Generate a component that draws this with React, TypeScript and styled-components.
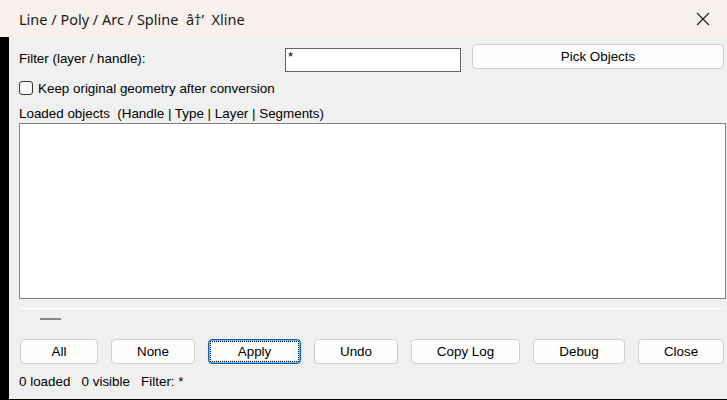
import React, { useState } from "react";
import styled, { createGlobalStyle } from "styled-components";

const GlobalStyle = createGlobalStyle`
  html, body {
    margin: 0;
    padding: 0;
    background: #f0f0f0;
  }
  * {
    box-sizing: border-box;
  }
`;

const BUTTONS = [
  { label: "All", width: 78, gap: 0 },
  { label: "None", width: 84, gap: 13 },
  { label: "Apply", width: 93, gap: 13, focused: true },
  { label: "Undo", width: 84, gap: 13 },
  { label: "Copy Log", width: 109, gap: 13 },
  { label: "Debug", width: 92, gap: 13 },
  { label: "Close", width: 86, gap: 13 },
];

const App: React.FC = () => {
  const [filter, setFilter] = useState("*");
  const [keep, setKeep] = useState(false);

  return (
    <Window>
      <GlobalStyle />
      <TitleBar>
        <Title>Line / Poly / Arc / Spline  â†’  Xline</Title>
        <CloseX>
          <svg width="14" height="14" viewBox="0 0 14 14">
            <path d="M1 1 L13 13 M13 1 L1 13" stroke="#1a1a1a" strokeWidth="1.1" fill="none" />
          </svg>
        </CloseX>
      </TitleBar>

      <Body>
        <Strip />
        <Content>
          <FilterRow>
            <Label>Filter (layer / handle):</Label>
            <FilterInput value={filter} onChange={(e) => setFilter(e.target.value)} />
            <PickButton>Pick Objects</PickButton>
          </FilterRow>

          <CheckRow>
            <CheckBox type="checkbox" checked={keep} onChange={() => setKeep(!keep)} />
            <Label>Keep original geometry after conversion</Label>
          </CheckRow>

          <ListCaption>Loaded objects  (Handle | Type | Layer | Segments)</ListCaption>
          <ObjectList />

          <Separator />
          <Grip />

          <ButtonRow>
            {BUTTONS.map((b) => (
              <ActionButton key={b.label} $width={b.width} $gap={b.gap} $focused={!!b.focused}>
                {b.focused ? <FocusRing>{b.label}</FocusRing> : b.label}
              </ActionButton>
            ))}
          </ButtonRow>

          <Status>0 loaded   0 visible   Filter: *</Status>
        </Content>
      </Body>
    </Window>
  );
};

export default App;

const Window = styled.div`
  width: 727px;
  height: 400px;
  display: flex;
  flex-direction: column;
  font-family: "Liberation Sans", Arial, sans-serif;
  font-size: 13.4px;
  color: #000;
  overflow: hidden;
`;

const TitleBar = styled.div`
  height: 37px;
  flex: none;
  display: flex;
  align-items: center;
  justify-content: space-between;
  padding: 0 17px 0 19px;
  background: #f8f0ed;
`;

const Title = styled.div`
  font-family: "Noto Sans", "Open Sans", sans-serif;
  font-size: 14.5px;
  white-space: pre;
  color: #1a1a1a;
  margin-top: 1px;
`;

const CloseX = styled.div`
  display: flex;
  margin-top: 1px;
`;

const Body = styled.div`
  flex: 1;
  display: flex;
  border-bottom: 1px solid #000;
`;

const Strip = styled.div`
  width: 9px;
  flex: none;
  background: #000;
`;

const Content = styled.div`
  flex: 1;
  display: flex;
  flex-direction: column;
  padding: 7px 1px 0 10px;
  background: #f0f0f0;
`;

const Label = styled.span`
  white-space: pre;
`;

const FilterRow = styled.div`
  display: flex;
  align-items: flex-start;
  height: 29px;

  ${Label} {
    width: 266px;
    margin-top: 7px;
  }
`;

const FilterInput = styled.input`
  width: 176px;
  height: 24px;
  margin-top: 4px;
  border: 1px solid #646464;
  background: #fff;
  padding: 0 2px 8px;
  font-family: inherit;
  font-size: 13px;
  outline: none;
`;

const PickButton = styled.button`
  width: 252px;
  height: 25px;
  margin-left: 11px;
  border: 1px solid #cfcfcf;
  border-radius: 4px;
  background: #fdfdfd;
  font-family: inherit;
  font-size: 13.4px;
  color: #000;
  padding: 0;
`;

const CheckRow = styled.div`
  display: flex;
  align-items: center;
  height: 16px;
  margin-top: 7px;
  gap: 5px;
`;

const CheckBox = styled.input`
  appearance: none;
  width: 14px;
  height: 14px;
  margin: 0;
  border: 1px solid #333;
  border-radius: 3px;
  background: #f8f8f8;
`;

const ListCaption = styled.div`
  margin-top: 8px;
  height: 19px;
  line-height: 19px;
  white-space: pre;
`;

const ObjectList = styled.div`
  height: 176px;
  background: #fff;
  border: 1px solid #828282;
`;

const Separator = styled.div`
  height: 1px;
  margin-top: 9px;
  background: #fff;
`;

const Grip = styled.div`
  width: 21px;
  height: 2px;
  margin: 9px 0 0 21px;
  background: #888;
`;

const ButtonRow = styled.div`
  display: flex;
  margin-top: 19px;
  padding-left: 1px;
`;

const ActionButton = styled.button<{ $width: number; $gap: number; $focused: boolean }>`
  width: ${(p) => p.$width}px;
  height: 25px;
  margin-left: ${(p) => p.$gap}px;
  padding: ${(p) => (p.$focused ? "1px" : "0")};
  border: ${(p) => (p.$focused ? "1px solid #0067c0" : "1px solid #d0d0d0")};
  box-shadow: ${(p) => (p.$focused ? "inset 0 0 0 0.5px #0067c0" : "none")};
  border-radius: 4px;
  background: #fdfdfd;
  font-family: inherit;
  font-size: 13.4px;
  color: #000;
  display: flex;
  align-items: center;
  justify-content: center;
`;

const FocusRing = styled.span`
  width: 100%;
  height: 100%;
  display: flex;
  align-items: center;
  justify-content: center;
  border: 1px dotted #000;
`;

const Status = styled.div`
  margin-top: 10px;
  white-space: pre;
`;
